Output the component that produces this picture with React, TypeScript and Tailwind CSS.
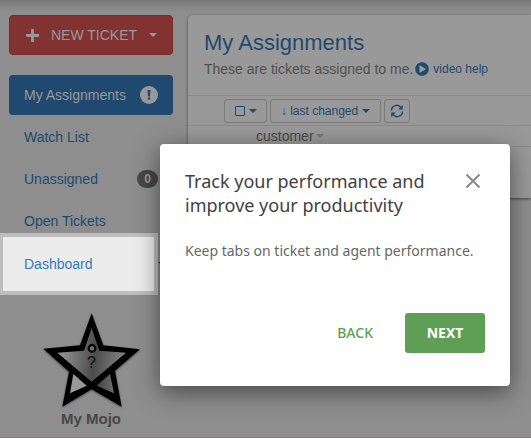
import { FaPlus, FaPlayCircle } from "react-icons/fa";

function Caret({ className = "" }: { className?: string }) {
  return (
    <span
      aria-hidden="true"
      className={`inline-block h-0 w-0 border-x-4 border-t-4 border-x-transparent align-middle ${className}`}
    />
  );
}

function MojoStar() {
  return (
    <svg viewBox="63 27 300 300" className="h-[100px] w-[100px] overflow-visible" aria-hidden="true">
      <defs>
        <linearGradient id="body" x1="0" x2="1" y1="0.4" y2="0.5">
          <stop offset="0.1" stopColor="#8e8e8e" />
          <stop offset="0.55" stopColor="#4c4c4c" />
          <stop offset="1" stopColor="#858585" />
        </linearGradient>
        <linearGradient id="leg" x1="0" x2="1">
          <stop offset="0" stopColor="#424242" />
          <stop offset="1" stopColor="#6d6d6d" />
        </linearGradient>
        <filter id="soft" x="-10%" y="-10%" width="120%" height="120%">
          <feDropShadow dx="0" dy="3" stdDeviation="3" floodColor="#000" floodOpacity="0.45" />
        </filter>
      </defs>
      <path
        filter="url(#soft)"
        fill="#040404"
        d="M215 40 250 136 360 148 285 212 305 320 215 268 127 320 147 215 70 146 180 136Z"
      />
      <path fill="url(#body)" d="M215 85 238 152 318 158 215 245 112 158 192 152Z" />
      <path fill="#989898" d="M160 222 200 257 150 280Z" />
      <path fill="url(#leg)" d="M270 222 230 257 282 280Z" />
      <circle cx="216" cy="145" r="10" fill="#777" stroke="#080808" strokeWidth="7" />
      <text x="214" y="203" textAnchor="middle" fontSize="48" fill="#0c0c0c" className="font-['Liberation_Sans',sans-serif]">
        ?
      </text>
    </svg>
  );
}

const navLink = "flex items-center justify-between rounded px-[15px] text-[#1f496e]";
const toolButton =
  "flex h-6 items-center justify-center rounded-[3px] border border-[#7a7a7a] text-xs text-[#1f496e]";

export default function App() {
  return (
    <div className="relative min-h-screen overflow-hidden border-b border-[#827d80] bg-[#8e8e8e] font-['Liberation_Sans',Arial,sans-serif] text-sm leading-5">
      <div className="absolute inset-x-0 top-0 h-3 bg-linear-to-b from-[#777777] to-[#8e8e8e]" />
      <div className="relative flex gap-[15px] pt-[15px] pl-[9px]">
        <aside className="w-[164px] shrink-0">
          <button
            type="button"
            className="flex h-10 w-full items-center rounded border border-[#7f2826] bg-[#823230] px-[15px] text-[#999999]"
          >
            <FaPlus className="size-[15px]" />
            <span className="ml-[11px]">NEW TICKET</span>
            <Caret className="ml-auto border-t-[#999999]" />
          </button>

          <nav className="mt-5 flex flex-col gap-0.5">
            <a href="#assignments" className="flex h-10 items-center justify-between rounded bg-[#1f496e] px-[15px] text-[#999999]">
              My Assignments
              <svg viewBox="0 0 18 18" className="size-[18px]" aria-hidden="true">
                <circle cx="9" cy="9" r="9" fill="#999999" />
                <path d="M7.500 4h3l-.5 6.500h-2ZM7.800 11.500h2.400v2.200H7.800Z" fill="#1f496e" />
              </svg>
            </a>
            <a href="#watch" className={`${navLink} h-10`}>Watch List</a>
            <a href="#unassigned" className={`${navLink} h-10`}>
              Unassigned
              <span className="flex h-[18px] w-[21px] items-center justify-center rounded-full bg-[#474747] text-xs font-bold text-[#999999]">
                0
              </span>
            </a>
            <a href="#open" className={`${navLink} h-10`}>Open Tickets</a>
            <a href="#dashboard" className={`${navLink} relative h-[42px]`}>
              <span className="absolute -top-[10px] right-[15px] -bottom-[10px] -left-[10px] border-4 border-[#bebebe] bg-[#ececec]" />
              <span className="relative text-[#337ab7]">Dashboard</span>
              <Caret className="relative -mr-2 border-t-[#1f496e]" />
            </a>
          </nav>

          <div className="mt-6 flex flex-col items-center">
            <MojoStar />
            <div className="text-center text-[15px] font-bold text-[#474747]">My Mojo</div>
          </div>
        </aside>

        <main className="h-[183px] min-w-0 flex-1 rounded-l-[5px] bg-[#999999] shadow-[0_1px_3px_rgba(0,0,0,0.55)]">
          <header className="h-20 px-4 pt-4">
            <h1 className="text-[22px] leading-6 text-[#1f496e]">My Assignments</h1>
            <div className="flex items-center whitespace-nowrap pt-1 text-[#505050]">
              These are tickets assigned to me.
              <a href="#video" className="ml-0.5 flex items-center gap-1 text-xs text-[#1f496e]">
                <FaPlayCircle className="size-[14px]" />
                video help
              </a>
            </div>
          </header>
          <div className="flex h-[30px] items-center gap-[3px] border-t border-[#8b8b8b] pl-9">
            <button type="button" aria-label="Select tickets" className={`${toolButton} w-[43px] gap-1`}>
              <span className="size-[10px] rounded-[1px] border border-[#1f496e]" />
              <Caret className="border-t-[#1f496e]" />
            </button>
            <button type="button" className={`${toolButton} w-[111px] gap-1`}>
              <span>↓ last changed</span>
              <Caret className="border-t-[#1f496e]" />
            </button>
            <button type="button" aria-label="Refresh" className={`${toolButton} w-[26px]`}>
              <svg viewBox="0 0 14 14" className="size-[14px]" fill="none" stroke="currentColor" strokeWidth="1.500" aria-hidden="true">
                <path d="M1.500 6.500A5.200 5.200 0 0 1 11 3.700M12.500 7.500A5.200 5.200 0 0 1 3 10.300" />
                <path d="M12.800 1v4.500H8.300ZM1.200 13V8.500h4.500Z" fill="currentColor" stroke="none" />
              </svg>
            </button>
          </div>
          <div className="flex h-[22px] items-center gap-0.5 border-y border-[#8b8b8b] pl-[68px] text-[#474747]">
            customer
            <Caret className="border-t-[#777777]" />
          </div>
        </main>
      </div>

      <section
        role="dialog"
        aria-labelledby="tour-title"
        className="absolute top-36 left-40 w-[350px] rounded bg-white px-[25px] pt-[25px] pb-[33px] font-['Noto_Sans',sans-serif] shadow-[0_6px_24px_rgba(0,0,0,0.5)]"
      >
        <div className="flex items-start justify-between">
          <h2 id="tour-title" className="w-[260px] text-lg leading-6 text-[#3f3f3f]">
            Track your performance and improve your productivity
          </h2>
          <button type="button" aria-label="Close" className="mt-1 mr-1 text-[#888888]">
            <svg viewBox="0 0 16 16" className="size-4" stroke="currentColor" strokeWidth="2" aria-hidden="true">
              <path d="M1.500 1.500l13 13M14.500 1.500l-13 13" />
            </svg>
          </button>
        </div>
        <p className="mt-6 whitespace-nowrap text-[#666666]">Keep tabs on ticket and agent performance.</p>
        <div className="mt-[52px] flex justify-end gap-3">
          <button type="button" className="h-10 px-5 font-medium text-[#5b9e52]">BACK</button>
          <button type="button" className="h-10 w-20 rounded-[3px] bg-[#5e9f55] font-bold text-white">NEXT</button>
        </div>
      </section>
    </div>
  );
}
